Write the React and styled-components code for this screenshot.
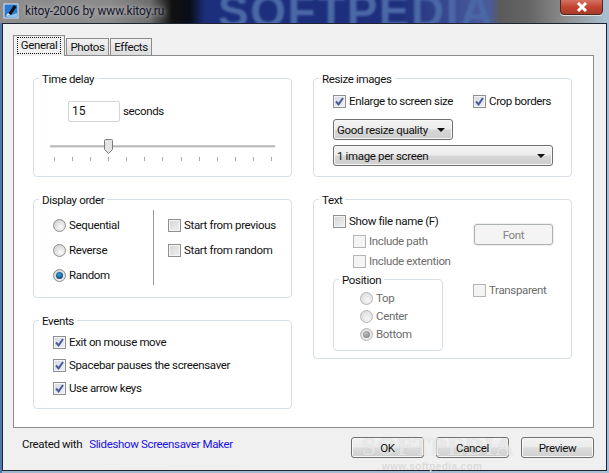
import React from "react";
import styled, { createGlobalStyle } from "styled-components";

const Global = createGlobalStyle`
  html, body { margin: 0; padding: 0; background: #8d9db5; }
  * { box-sizing: border-box; }
  body { font-family: Roboto, "Liberation Sans", sans-serif; font-size: 11.5px; letter-spacing: -.35px; color: #111; }
`;

const Win = styled.div`
  position: relative; width: 609px; height: 473px; overflow: hidden;
  display: flex; flex-direction: column;
  background: linear-gradient(90deg, #4f78ad 0, #4f78ad 2px, #9fb6cf 2px, #a9bfd6 100%);
`;
const TitleBar = styled.div`
  position: relative; height: 23px; flex: none; display: flex; align-items: center; padding: 0 0 1px 3px; gap: 6px; overflow: hidden;
  background: linear-gradient(90deg, #8d8d8d 0, #8a8a8a 110px, #6c6c6c 150px, #111 172px, #0a0c18 190px, #1c2f7c 205px, #1e2f7c 400px, #4a5a9c 480px, #4b5a98 490px, #5a5a5a 500px, #666 530px, #8d8d8d 565px, #a9bdd0 605px);
`;
const TitleMark = styled.div`
  position: absolute; left: 218px; top: -16px; font: 700 46px "Liberation Sans", sans-serif; letter-spacing: 1.5px;
  color: #4b68a6; filter: blur(1px); white-space: nowrap;
`;
const AppIcon = styled.svg`width: 16px; height: 16px; flex: none; position: relative;`;
const TitleText = styled.div`
  position: relative; font-size: 12px; letter-spacing: -.1px; color: #17172e;
  text-shadow: 0 0 5px #bbb, 0 0 8px #bbb;
`;
const Close = styled.div`
  position: absolute; left: 560px; top: -2px; width: 43px; height: 17px; border: 1px solid #4a2a26; border-radius: 0 0 4px 4px;
  background: linear-gradient(#d8786a, #c1442f 55%, #a8392a); box-shadow: 0 1px 0 #ddd;
  display: flex; align-items: center; justify-content: center;
`;
const Client = styled.div`
  flex: none; margin-left: 2px; width: 605px; height: 448px; background: #f0f0f0;
  border: 1px solid #1d2533; padding: 12px 12px 0 10px; display: flex; flex-direction: column;
`;
const Tabs = styled.div`display: flex; align-items: flex-end; height: 20px; margin-bottom: -1px; position: relative; z-index: 1;`;
const Tab = styled.div`
  height: ${p => p.$active ? 21 : 18}px; width: ${p => p.$w}px; margin-right: 1px;
  border: 1px solid #8c8c8c; border-bottom: ${p => p.$active ? "0" : "1px solid #8c8c8c"};
  background: ${p => p.$active ? "#f0f0f0" : "linear-gradient(#f2f2f2, #dcdcdc)"};
  display: flex; align-items: center; justify-content: center; padding-bottom: ${p => p.$active ? 2 : 0}px;
`;
const Focus = styled.span`border: 1px dotted #111; padding: 0 3px; line-height: 15px;`;
const Panel = styled.div`
  height: 373px; background: #fff; border: 1px solid #8c8c8c; padding: 22px 21px 0 19px;
  display: grid; grid-template-columns: 259px 259px; column-gap: 21px; align-content: start;
`;
const Column = styled.div`display: flex; flex-direction: column; gap: 22px;`;
const Group = styled.div`
  position: relative; height: ${p => p.$h}px; border: 1px solid #d5dfe5; border-radius: 4px; padding: ${p => p.$pad || "0"};
  width: ${p => p.$w ? p.$w + "px" : "auto"};
`;
const Legend = styled.div`
  position: absolute; left: 5px; top: -7px; background: #fff; padding: 0 3px; line-height: 15px; white-space: nowrap;
`;
const Row = styled.div`display: flex; align-items: center; gap: ${p => p.$gap ?? 3}px; white-space: nowrap; height: ${p => p.$h || 13}px; margin-left: ${p => p.$ml || 0}px; margin-top: ${p => p.$mt || 0}px; width: ${p => p.$w ? p.$w + "px" : "auto"};
  color: ${p => p.$dis ? "#6d6d6d" : "inherit"};`;
const Label = styled.span`margin-top: -2px;`;
const Box = styled.span`
  width: 13px; height: 13px; flex: none; border: 1px solid ${p => p.$dis ? "#b4b4b4" : "#8e8f8f"};
  background: ${p => p.$dis ? "#f4f4f4" : p.$on ? "linear-gradient(135deg, #d6dae6, #eef0f6)" : "linear-gradient(135deg, #d4d4d4, #f2f2f2)"};
  box-shadow: inset 0 0 0 1px #f4f4f4; display: flex; align-items: center; justify-content: center;
`;
const Round = styled.span`
  width: 13px; height: 13px; flex: none; border-radius: 50%; border: 1px solid ${p => p.$dis ? "#b5b5b5" : "#8e8f8f"};
  background: ${p => p.$dis ? "radial-gradient(circle at 60% 65%, #f5f5f5, #d8d8d8)" : "radial-gradient(circle at 60% 65%, #fafafa, #c8c8c8)"};
  display: flex; align-items: center; justify-content: center;
`;
const Dot = styled.span`
  width: 7px; height: 7px; border-radius: 50%;
  background: ${p => p.$dis ? "radial-gradient(circle at 40% 35%, #c0c0c0, #777)" : "radial-gradient(circle at 45% 40%, #36a6e0, #0b3f70 80%)"};
`;
const Check = ({ on, dis, label, ...r }) => (
  <Row $dis={dis} {...r}>
    <Box $dis={dis} $on={on}>
      {on && <svg width="9" height="9" viewBox="0 0 9 9"><path d="M1 4.5 L3.6 7.4 L8 1" fill="none" stroke="#4a5c9a" strokeWidth="2" /></svg>}
    </Box>
    <Label>{label}</Label>
  </Row>
);
const Radio = ({ on, dis, label, ...r }) => (
  <Row $dis={dis} {...r}>
    <Round $dis={dis}>{on && <Dot $dis={dis} />}</Round>
    <Label>{label}</Label>
  </Row>
);
const NumberBox = styled.div`
  width: 52px; height: 21px; border: 1px solid #d0d5da; border-radius: 2px; background: #fff; padding: 2px 0 0 3px; font-size: 12px; letter-spacing: 0;
`;
const Slider = styled.div`position: relative; margin: 23px 0 0 16px; width: 225px; height: 22px;`;
const Track = styled.div`height: 3px; background: #b9b9b9; border-top: 1px solid #c8c8c8; border-bottom: 1px solid #e4e4e4;`;
const Thumb = styled.svg`position: absolute; left: 54px; top: -6px; width: 9px; height: 15px;`;
const Ticks = styled.div`display: flex; justify-content: space-between; margin: 9px 3px 0 4px;`;
const Tick = styled.span`width: 1px; height: 4px; background: #a8a8a8;`;
const Sel = styled.div`
  width: ${p => p.$w}px; height: 21px; margin-top: ${p => p.$mt}px; border: 1px solid #6f6f6f; border-radius: 3px; white-space: nowrap;
  background: linear-gradient(#f4f4f4 0, #ececec 48%, #d6d6d6 52%, #cfcfcf 100%); box-shadow: inset 0 0 0 1px #f7f7f7;
  display: flex; align-items: center; justify-content: space-between; padding: 0 7px 0 3px;
`;
const Arrow = styled.span`width: 0; height: 0; border: 4px solid transparent; border-top: 4px solid #111; border-bottom: 0;`;
const OrderGrid = styled.div`display: flex; height: 100%;`;
const OrderCol = styled.div`display: flex; flex-direction: column; gap: 12px; padding: 19px 0 0 ${p => p.$pl || 0}px; width: ${p => p.$w}px;`;
const Divider = styled.div`width: 1px; height: 75px; margin-top: 10px; background: #9a9a9a; margin-right: 14px;`;
const EventList = styled.div`display: flex; flex-direction: column; gap: 10px; padding: 15px 0 0 19px;`;
const TextGrid = styled.div`display: grid; grid-template-columns: 140px 1fr; padding: 15px 0 0 19px;`;
const RightCol = styled.div`display: flex; flex-direction: column; padding-top: 9px; position: relative;`;
const FontBtn = styled.div`
  width: 79px; height: 21px; margin-left: 1px; border: 1px solid #adb2b5; border-radius: 3px; background: #f4f4f4; color: #838383;
  display: flex; align-items: center; justify-content: center; box-shadow: 0 0 0 1px #eee;
`;
const PosList = styled.div`display: flex; flex-direction: column; gap: 5px; padding: 12px 0 0 26px;`;
const PosWrap = styled.div`margin-top: 11px; background: #fff;`;
const Footer = styled.div`display: flex; align-items: center; padding: 9px 0 0 9px;`;
const Credit = styled.div`display: flex; gap: 7px; margin-bottom: 7px;`;
const Link = styled.span`color: #1a12e6;`;
const Buttons = styled.div`margin-left: auto; display: flex; gap: 12px;`;
const Btn = styled.div`
  width: 73px; height: 21px; border: 1px solid #707070; border-radius: 3px;
  background: linear-gradient(#f2f2f2 0, #ebebeb 48%, #dddddd 52%, #cfcfcf 100%); box-shadow: inset 0 0 0 1px #f8f8f8;
  display: flex; align-items: center; justify-content: center;
`;
const BtnLabel = styled.span`position: relative; z-index: 2;`;
const Mark = styled.div`
  position: absolute; z-index: 1; left: 362px; top: 433px; font: 700 25px "Liberation Serif", serif; letter-spacing: 1px;
  color: rgba(255,255,255,.6); text-shadow: 0 0 1px rgba(140,140,140,.4); pointer-events: none; white-space: nowrap;
`;
const MarkSmall = styled.div`
  position: absolute; left: 382px; top: 461px; font: 700 10px "Liberation Sans", sans-serif; letter-spacing: .4px;
  color: #dcdcdc; pointer-events: none; white-space: nowrap;
`;

export default function App() {
  return (
    <Win>
      <Global />
      <TitleBar>
        <TitleMark>SOFTPEDIA</TitleMark>
        <AppIcon viewBox="0 0 16 16">
          <rect x="1" y="1" width="14" height="14" fill="#2a78d0" stroke="#dfe8f2" />
          <path d="M2 14 L14 14 L14 10 Z" fill="#8fc3ef" />
          <path d="M5 11 L11 2 L13.5 4 L8 12 Z" fill="#111" />
          <path d="M3 13 L5 10 L7.5 12 Z" fill="#eee" />
        </AppIcon>
        <TitleText>kitoy-2006 by www.kitoy.ru</TitleText>
        <Close>
          <svg width="12" height="10" viewBox="0 0 12 10"><path d="M2 1 L10 9 M10 1 L2 9" stroke="#fff" strokeWidth="3" /></svg>
        </Close>
      </TitleBar>
      <Client>
        <Tabs>
          <Tab $active $w={52}><Focus>General</Focus></Tab>
          <Tab $w={43}>Photos</Tab>
          <Tab $w={42}>Effects</Tab>
        </Tabs>
        <Panel>
          <Column>
            <Group $h={99}>
              <Legend>Time delay</Legend>
              <Row $h={21} $ml={34} $mt={22}><NumberBox>15</NumberBox><Label>seconds</Label></Row>
              <Slider>
                <Track />
                <Thumb viewBox="0 0 9 15">
                  <path d="M.5 1.5 Q.5.5 1.5.5 H7.5 Q8.5.5 8.5 1.5 V10.5 L4.5 14.5 L.5 10.5 Z" fill="#e4e4e4" stroke="#7c7c7c" />
                </Thumb>
                <Ticks>{Array.from({ length: 13 }, (_, i) => <Tick key={i} />)}</Ticks>
              </Slider>
            </Group>
            <Group $h={99}>
              <Legend>Display order</Legend>
              <OrderGrid>
                <OrderCol $w={119} $pl={19}>
                  <Radio label="Sequential" />
                  <Radio label="Reverse" />
                  <Radio on label="Random" />
                </OrderCol>
                <Divider />
                <OrderCol $w={120}>
                  <Check label="Start from previous" />
                  <Check label="Start from random" />
                </OrderCol>
              </OrderGrid>
            </Group>
            <Group $h={89}>
              <Legend>Events</Legend>
              <EventList>
                <Check on label="Exit on mouse move" />
                <Check on label="Spacebar pauses the screensaver" />
                <Check on label="Use arrow keys" />
              </EventList>
            </Group>
          </Column>
          <Column>
            <Group $h={99} $pad="16px 0 0 19px">
              <Legend>Resize images</Legend>
              <Row $gap={0}>
                <Check on label="Enlarge to screen size" $w={140} />
                <Check on label="Crop borders" />
              </Row>
              <Sel $w={120} $mt={11}>Good resize quality<Arrow /></Sel>
              <Sel $w={220} $mt={5}>1 image per screen<Arrow /></Sel>
            </Group>
            <Group $h={160}>
              <Legend>Text</Legend>
              <TextGrid>
                <div>
                  <Check label="Show file name (F)" />
                  <Check dis label="Include path" $ml={20} $mt={7} />
                  <Check dis label="Include extention" $ml={20} $mt={7} />
                  <PosWrap>
                    <Group $h={72} $w={110}>
                      <Legend>Position</Legend>
                      <PosList>
                        <Radio dis label="Top" />
                        <Radio dis label="Center" />
                        <Radio dis on label="Bottom" />
                      </PosList>
                    </Group>
                  </PosWrap>
                </div>
                <RightCol>
                  <FontBtn>Font</FontBtn>
                  <Check dis label="Transparent" $mt={39} />
                </RightCol>
              </TextGrid>
            </Group>
          </Column>
        </Panel>
        <Footer>
          <Credit>
            <span>Created with</span>
            <Link>Slideshow Screensaver Maker</Link>
          </Credit>
          <Buttons>
            <Btn><BtnLabel>OK</BtnLabel></Btn>
            <Btn><BtnLabel>Cancel</BtnLabel></Btn>
            <Btn><BtnLabel>Preview</BtnLabel></Btn>
          </Buttons>
        </Footer>
      </Client>
      <Mark>SOFTPEDIA</Mark>
      <MarkSmall>www.softpedia.com</MarkSmall>
    </Win>
  );
}
